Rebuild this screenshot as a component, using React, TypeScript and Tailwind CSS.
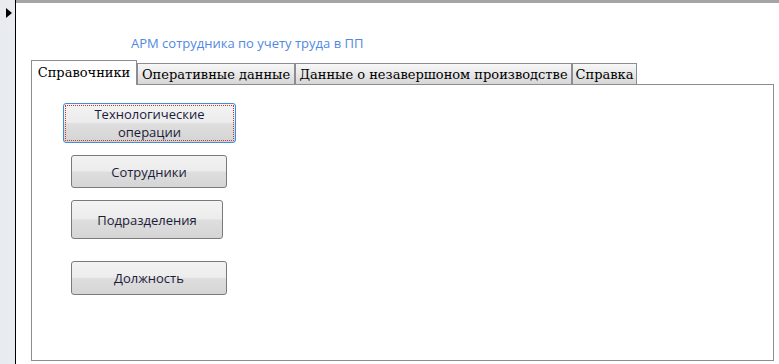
const tabs = [
  { label: "Справочники", w: "w-[106px]", active: true },
  { label: "Оперативные данные", w: "w-[158px]", active: false },
  { label: "Данные о незавершоном производстве", w: "w-[277px]", active: false },
  { label: "Справка", w: "w-[65px]", active: false },
];

const btn =
  "flex items-center justify-center rounded-[3px] border text-[13px] leading-[18px] text-[#1c1c3a] text-center bg-[linear-gradient(#f3f3f3_0%,#ececec_48%,#dedede_52%,#d5d5d5_100%)]";

export default function App() {
  return (
    <div className="flex h-[364px] w-[779px] overflow-hidden bg-white font-['Open_Sans',sans-serif]">
      {/* record selector strip */}
      <div className="w-[16px] shrink-0 border-r border-black bg-[#e8ebf0] pl-[6px] pt-[8px]">
        <svg width="7" height="10" viewBox="0 0 7 10">
          <polygon points="0,0 6,5 0,10" fill="#000" />
        </svg>
      </div>

      <div className="flex min-w-0 flex-1 flex-col border-t-[3px] border-[#a5a5a8]">
        <div className="pl-[115px] pt-[32px] text-[13px] leading-[16px] text-[#5189e2]">
          АРМ сотрудника по учету труда в ПП
        </div>

        <div className="relative z-10 -mb-px ml-[15px] mt-[9px] flex items-end font-['DejaVu_Serif',serif] text-[13px] text-black">
          {tabs.map((t) =>
            t.active ? (
              <div
                key={t.label}
                className={`${t.w} flex h-[25px] justify-center border-x border-t border-[#8c8c94] bg-white pt-[3px] leading-[17px]`}
              >
                {t.label}
              </div>
            ) : (
              <div
                key={t.label}
                className={`${t.w} flex h-[22px] justify-center border border-[#8c8c94] bg-[linear-gradient(#f7f7f7,#e6e6e6_55%,#d6d6d6)] pt-[2px] leading-[17px]`}
              >
                {t.label}
              </div>
            )
          )}
        </div>

        <div className="mb-[3px] ml-[15px] mr-[5px] flex flex-1 flex-col items-start border border-[#8c8c94]">
          <button
            className={`${btn} ml-[31px] mt-[18px] h-[40px] w-[173px] border-[#3b8fdd] outline-1 outline-offset-[-3px] outline-dotted outline-[#c0392b]`}
          >
            Технологические
            <br />
            операции
          </button>
          <button className={`${btn} ml-[39px] mt-[12px] h-[33px] w-[156px] border-[#7a7a7a]`}>
            Сотрудники
          </button>
          <button className={`${btn} ml-[39px] mt-[12px] h-[39px] w-[152px] border-[#7a7a7a]`}>
            Подразделения
          </button>
          <button className={`${btn} ml-[39px] mt-[22px] h-[34px] w-[156px] border-[#7a7a7a]`}>
            Должность
          </button>
        </div>
      </div>
    </div>
  );
}
